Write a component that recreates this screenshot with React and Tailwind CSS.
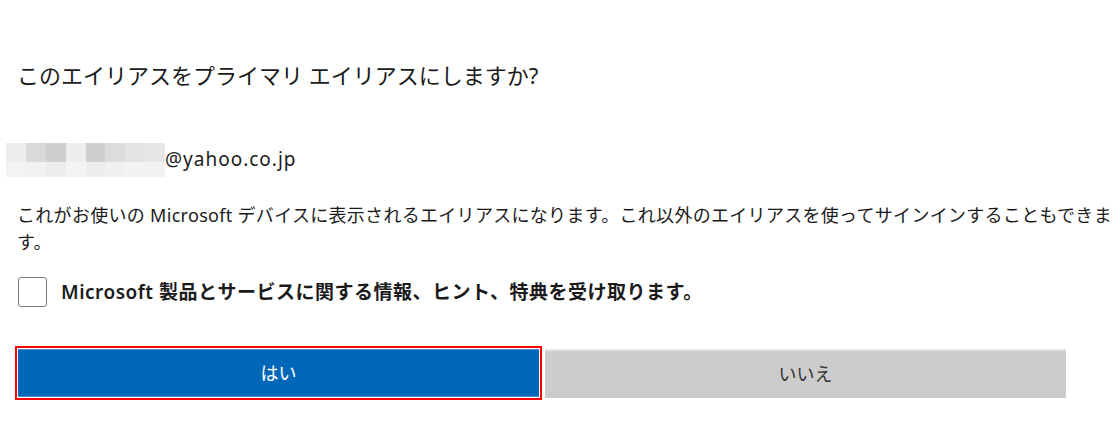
import React from "react";

const font = { fontFamily: '"Noto Sans", "Noto Sans CJK JP", sans-serif' };

const topRow = ["#ececec", "#d9d9d9", "#cfcfcf", "#ededed", "#cfcfcf", "#dcdcdc", "#e3e3e3", "#e6e6e6"];
const bottomRow = ["#f3f3f3", "#f1f1f1", "#ededed", "#f4f4f4", "#eeeeee", "#f0f0f0", "#f2f2f2", "#f1f1f1"];

const Mosaic = () => (
  <div className="flex flex-col w-[159px]">
    <div className="flex h-[19px]">
      {topRow.map((c, i) => (
        <div key={i} className="flex-1" style={{ backgroundColor: c }} />
      ))}
    </div>
    <div className="flex h-[15px]">
      {bottomRow.map((c, i) => (
        <div key={i} className="flex-1" style={{ backgroundColor: c }} />
      ))}
    </div>
  </div>
);

const App = () => {
  return (
    <div className="w-[1120px] h-[425px] bg-white overflow-hidden text-[#1b1b1b]" style={font}>
      <h1 className="pl-[17px] pt-[58px] text-[22px] leading-[34px] font-normal">
        このエイリアスをプライマリ エイリアスにしますか?
      </h1>

      <div className="flex items-center mt-[51px] pl-[6px]">
        <Mosaic />
        <span className="text-[19px] leading-[28px] tracking-[1px] -mt-[3px]">@yahoo.co.jp</span>
      </div>

      <p className="pl-[17px] mt-[25px] text-[18px] leading-[27px] tracking-[0.3px] whitespace-nowrap">
        これがお使いの Microsoft デバイスに表示されるエイリアスになります。これ以外のエイリアスを使ってサインインすることもできま
        <br />
        す。
      </p>

      <label className="flex items-center gap-[14px] pl-[18px] mt-[21px]">
        <span className="w-[29px] h-[30px] border border-[#7a7a7a] rounded-[3px] bg-white shrink-0" />
        <span className="text-[19px] leading-[30px] tracking-[0.5px] font-semibold text-[#1b1b1b]">
          Microsoft 製品とサービスに関する情報、ヒント、特典を受け取ります。
        </span>
      </label>

      <div className="flex gap-[6px] pl-[18px] mt-[42px]">
        <button className="w-[521px] h-[48px] bg-[#0067b8] border-y border-[#3f8fd0] text-white text-[18px] outline-2 outline-[#ff0000] outline-offset-1">
          はい
        </button>
        <button className="w-[521px] h-[49px] bg-[#cccccc] border-t-2 border-[#e3e3e3] text-[#333333] text-[18px]">
          いいえ
        </button>
      </div>
    </div>
  );
};

export default App;
